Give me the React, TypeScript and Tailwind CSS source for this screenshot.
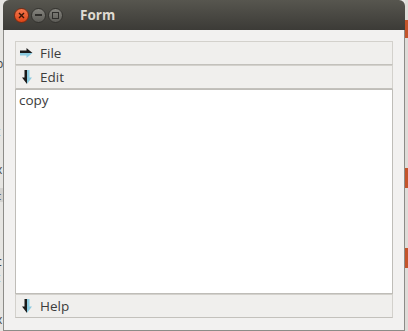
function RightArrow() {
  return (
    <svg width="13" height="10" viewBox="0 0 13 10">
      <path d="M0 2.5 H6.5 V0 L12.5 5 H0 Z" fill="#1a1a1a" />
      <path d="M0 5 H12.5 L6.5 10 V7.5 H0 Z" fill="#8ccbe0" />
    </svg>
  );
}

function DownArrow() {
  return (
    <svg width="10" height="14" viewBox="0 0 10 14">
      <path d="M2.5 0 V7.5 H0 L5 14 V0 Z" fill="#1a1a1a" />
      <path d="M5 0 V14 L10 7.5 H7.5 V0 Z" fill="#8ccbe0" />
    </svg>
  );
}

function Row({ icon, label }: { icon: React.ReactNode; label: string }) {
  return (
    <div className="h-[24px] flex items-center gap-[7px] pl-[4px] bg-[#f0efed] border border-[#d3d1cc] border-b-[#c3c1bc]">
      <span className="w-[13px] flex justify-center">{icon}</span>
      <span className="text-[13.5px] text-[#3c3c3c]">{label}</span>
    </div>
  );
}

export default function App() {
  return (
    <div
      className="w-[408px] h-[331px] flex bg-[#e6e5e2] overflow-hidden"
      style={{ fontFamily: '"Open Sans", "DejaVu Sans", sans-serif' }}
    >
      {/* desktop text peeking out on the left */}
      <div className="w-[3px] flex flex-col text-[12px] leading-none text-[#444] overflow-hidden">
        <div className="h-[58px]" />
        <span className="-ml-[4px]">p</span>
        <div className="h-[40px]" />
        <span className="-ml-[4px]">l</span>
        <span className="-ml-[4px] mt-[4px]">t</span>
        <div className="h-[26px]" />
        <span className="-ml-[4px]">x</span>
        <div className="h-[14px] bg-[#d3d2cf] mt-[12px] flex items-center">
          <span className="-ml-[4px] text-[11px]">c</span>
        </div>
        <div className="h-[54px]" />
        <span className="-ml-[4px]">c</span>
        <span className="-ml-[4px] mt-[4px]">t</span>
        <div className="h-[30px]" />
        <span className="-ml-[4px]">x</span>
      </div>

      {/* window */}
      <div className="w-[402px] h-[331px] flex flex-col">
        <div className="h-[30px] rounded-t-[6px] bg-gradient-to-b from-[#57564f] to-[#3c3b37] flex items-center pl-[11px]">
          <div className="w-[15px] h-[15px] rounded-full bg-gradient-to-b from-[#f6774c] to-[#dc4414] border border-[#7a2b12] flex items-center justify-center">
            <svg width="7" height="7" viewBox="0 0 7 7">
              <path d="M1 1 L6 6 M6 1 L1 6" stroke="#3a1608" strokeWidth="1.4" />
            </svg>
          </div>
          <div className="w-[15px] h-[15px] ml-[2px] rounded-full bg-gradient-to-b from-[#85847e] to-[#5d5c57] border border-[#34332f] flex items-center justify-center">
            <div className="w-[7px] h-[2px] bg-[#2f2e2b]" />
          </div>
          <div className="w-[15px] h-[15px] ml-[2px] rounded-full bg-gradient-to-b from-[#85847e] to-[#5d5c57] border border-[#34332f] flex items-center justify-center">
            <div className="w-[7px] h-[7px] border-[1.5px] border-[#2f2e2b]" />
          </div>
          <span className="ml-[17px] text-[13.5px] font-bold text-[#dfdbd2]">Form</span>
        </div>

        <div className="flex-1 bg-[#f2f1f0] border-l border-r border-b border-[#8d8c88] pt-[11px] pl-[11px] pr-[11px] pb-[12px] flex flex-col">
          <Row icon={<RightArrow />} label="File" />
          <Row icon={<DownArrow />} label="Edit" />
          <div className="flex-1 bg-white border border-[#bfbdb8] pl-[3px] pt-[1px] text-[13.5px] text-[#3c3c3c] leading-[18px]">
            copy
          </div>
          <Row icon={<DownArrow />} label="Help" />
        </div>
      </div>

      {/* right edge of desktop */}
      <div className="w-[3px] flex flex-col bg-[#dedcd8]">
        <div className="h-[20px]" />
        <div className="h-[18px] bg-[#c4542a]" />
        <div className="h-[130px]" />
        <div className="h-[20px] bg-[#c4542a]" />
        <div className="h-[60px]" />
        <div className="h-[20px] bg-[#c4542a]" />
      </div>
    </div>
  );
}
